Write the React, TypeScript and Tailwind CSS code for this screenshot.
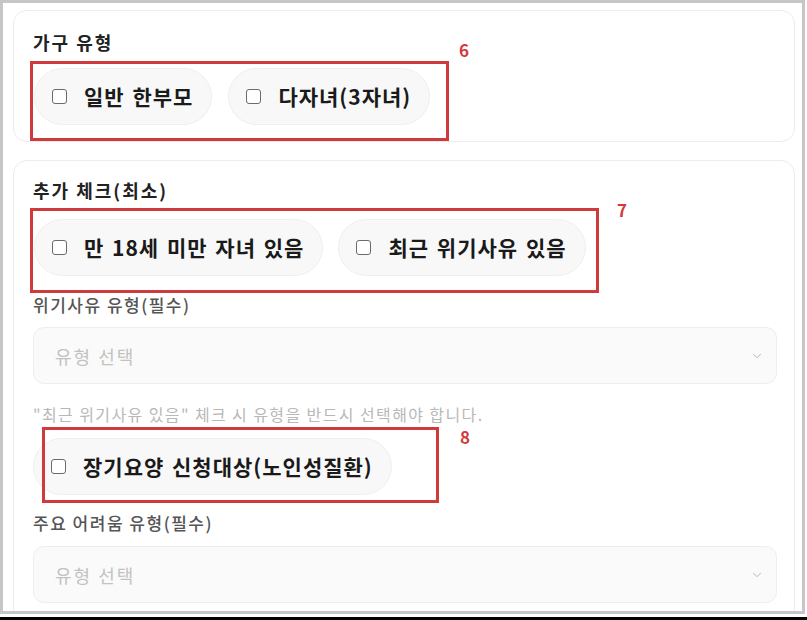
import { ChevronDown } from "lucide-react";

const font = "font-['Noto_Sans_CJK_KR','Noto_Sans',sans-serif]";

function Chip({ label }: { label: string }) {
  return (
    <label className="flex h-[57px] items-center gap-[17px] rounded-full border border-[#efefef] bg-[#f8f8f9] pl-[17px] pr-[18px]">
      <span className="h-[15px] w-[15px] shrink-0 rounded-[3px] border-[1.5px] border-[#6b6b6b] bg-white" />
      <span className="whitespace-nowrap text-[21px] font-bold leading-none tracking-[1px] text-[#1a1a1a] [word-spacing:2px]">
        {label}
      </span>
    </label>
  );
}

function Select() {
  return (
    <div className="flex h-[57px] w-[744px] items-center justify-between rounded-[11px] border border-[#eeeeee] bg-[#fafafa] pl-[21px] pr-[12px]">
      <span className="text-[18px] leading-none tracking-[2px] text-[#c2c2c2]">유형 선택</span>
      <ChevronDown size={14} strokeWidth={1.6} className="text-[#b0b0b0]" />
    </div>
  );
}

function Mark({ n, className }: { n: string; className: string }) {
  return (
    <span className={`absolute text-[17px] font-bold leading-none text-[#d33a3d] ${className}`}>{n}</span>
  );
}

export default function App() {
  return (
    <div className={`flex h-[620px] w-[807px] flex-col bg-white ${font}`}>
      <div className="h-[614px] w-[805px] overflow-hidden border-[3px] border-[#c6c6c6] bg-white pl-[10px] pt-[7px]">
        {/* 가구 유형 */}
        <section className="relative h-[132px] w-[782px] rounded-[14px] border border-[#ececec] bg-white px-[19px] pt-[19px]">
          <h3 className="text-[18px] font-bold leading-[24px] tracking-[2px] text-[#222]">가구 유형</h3>
          <div className="mt-[14px] flex gap-[16px] pl-[1px]">
            <Chip label="일반 한부모" />
            <Chip label="다자녀(3자녀)" />
          </div>
          <div className="absolute left-[16px] top-[50px] h-[80px] w-[419px] border-[3px] border-[#cf3a3d]" />
          <Mark n="6" className="left-[445px] top-[30px]" />
        </section>

        {/* 추가 체크 */}
        <section className="relative mt-[18px] h-[470px] w-[782px] rounded-[14px] border border-[#ececec] bg-white px-[19px] pt-[17px]">
          <h3 className="text-[18px] font-bold leading-[24px] tracking-[2px] text-[#222]">추가 체크(최소)</h3>
          <div className="mt-[17px] flex gap-[15px] pl-[1px]">
            <Chip label="만 18세 미만 자녀 있음" />
            <Chip label="최근 위기사유 있음" />
          </div>
          <p className="mt-[18px] text-[17px] font-medium leading-[22px] tracking-[1.5px] text-[#555]">위기사유 유형(필수)</p>
          <div className="mt-[11px]">
            <Select />
          </div>
          <p className="mt-[21px] text-[16px] leading-[18px] tracking-[1.4px] text-[#b8b8b8]">
            "최근 위기사유 있음" 체크 시 유형을 반드시 선택해야 합니다.
          </p>
          <div className="mt-[15px] flex">
            <Chip label="장기요양 신청대상(노인성질환)" />
          </div>
          <p className="mt-[17px] text-[17px] font-medium leading-[22px] tracking-[1.5px] text-[#555]">주요 어려움 유형(필수)</p>
          <div className="mt-[12px]">
            <Select />
          </div>
          <div className="absolute left-[16px] top-[47px] h-[85px] w-[569px] border-[3px] border-[#cf3a3d]" />
          <Mark n="7" className="left-[603px] top-[40px]" />
          <div className="absolute left-[28px] top-[266px] h-[76px] w-[397px] border-[3px] border-[#cf3a3d]" />
          <Mark n="8" className="left-[446px] top-[267px]" />
        </section>
      </div>
      <div className="mt-[3px] h-[3px] w-full bg-black" />
    </div>
  );
}
